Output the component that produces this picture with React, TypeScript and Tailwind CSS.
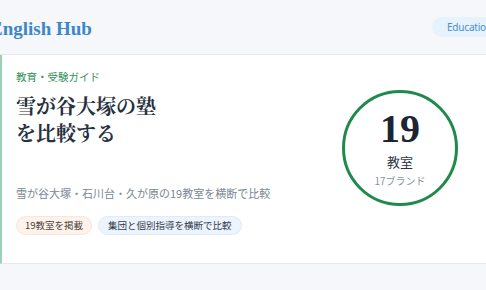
import React from 'react';

const serif = { fontFamily: '"Liberation Serif", "DejaVu Serif", "Noto Sans CJK JP", serif' };

const App: React.FC = () => {
  return (
    <div
      className="w-full min-h-[290px] overflow-hidden bg-[#f5f7fb]"
      style={{ fontFamily: '"Noto Sans CJK JP", "Noto Sans", sans-serif' }}
    >
      <div className="w-[530px] -ml-[8px]">
        {/* Header */}
        <header className="h-[55px] flex items-center justify-between border-b border-[#e3e9f1]">
          <span className="-ml-[2px] text-[19px] font-bold text-[#3d87c6] leading-none mt-[2px]" style={serif}>
            English Hub
          </span>
          <span
            className="mr-[10px] w-[80px] pl-[15px] h-[20px] flex items-center rounded-full bg-[#e6f2fc] text-[10px] tracking-[-0.2px] text-[#4a90d0] whitespace-nowrap"
            style={{ fontFamily: '"Noto Sans", "Open Sans", sans-serif' }}
          >
            Education
          </span>
        </header>

        {/* Card */}
        <div className="ml-[8px] bg-white border-b border-[#e3e9f1] border-l-2 border-l-[#98d3b4] flex items-start pl-[14px] pt-[14px] pb-[28px]">
          <div className="w-[326px] shrink-0">
            <p className="text-[10.5px] leading-[16px] text-[#2f8f57]">教育・受験ガイド</p>
            <h1
              className="mt-[7px] text-[20px] font-bold leading-[27px] text-[#27313f]"
              style={{ fontFamily: '"Noto Serif CJK JP", "Liberation Serif", "Noto Sans CJK JP", serif' }}
            >
              雪が谷大塚の塾
              <br />
              を比較する
            </h1>
            <p className="mt-[38px] text-[11px] leading-[18px] text-[#7b8694]">
              雪が谷大塚・石川台・久が原の19教室を横断で比較
            </p>
            <div className="mt-[14px] flex gap-[6px]">
              <span className="h-[19px] px-[8px] flex items-center rounded-full bg-[#fdf3ec] border border-[#f6e6db] text-[9.5px] text-[#4a3f38]">
                19教室を掲載
              </span>
              <span className="h-[19px] px-[9px] flex items-center rounded-full bg-[#edf4fd] border border-[#e0ebf8] text-[9.5px] text-[#2f3a4a]">
                集団と個別指導を横断で比較
              </span>
            </div>
          </div>

          <div className="mt-[21px] w-[116px] h-[116px] shrink-0 rounded-full border-[3px] border-[#1f8a4c] flex flex-col items-center justify-center">
            <span className="text-[40px] font-bold leading-[40px] text-[#1c2533] -mt-[1px]" style={serif}>
              19
            </span>
            <span className="mt-[5px] text-[13px] leading-[16px] text-[#2c3440]">教室</span>
            <span className="mt-[4px] text-[10px] leading-[13px] text-[#8a94a2]">17ブランド</span>
          </div>
        </div>
      </div>
    </div>
  );
};

export default App;
